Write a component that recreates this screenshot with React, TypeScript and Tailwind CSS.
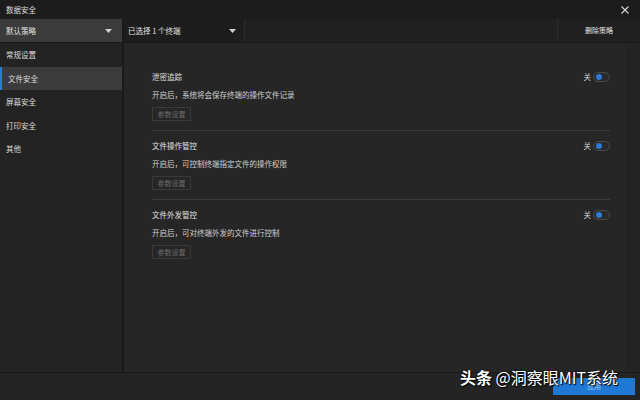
import React from "react";

const font = { fontFamily: '"Noto Sans CJK SC", "Noto Sans", sans-serif' };

function Caret() {
  return (
    <svg width="7" height="4" viewBox="0 0 7 4" className="shrink-0">
      <path d="M0 0 L7 0 L3.5 4 Z" fill="#d0d0d0" />
    </svg>
  );
}

function Toggle() {
  return (
    <div className="flex items-center gap-[2px]">
      <span className="text-[7.5px] leading-none text-[#d8d8d8]">关</span>
      <div className="h-[10px] w-[17px] rounded-full border border-[#4a4a4a] bg-[#2a2a2a] flex items-center pl-[2px]">
        <div className="h-[6px] w-[6px] rounded-full bg-[#2a7ad6]" />
      </div>
    </div>
  );
}

function Section({ title, desc, last }: { title: string; desc: string; last?: boolean }) {
  return (
    <div className={last ? "pt-[9px]" : "pt-[9px] pb-[9px] border-b border-[#3a3a3a]"}>
      <div className="flex h-[12px] items-center justify-between">
        <span className="text-[7.5px] leading-none text-[#e0e0e0]">{title}</span>
        <Toggle />
      </div>
      <div className="mt-[6px] flex h-[12px] items-center text-[7.5px] leading-none text-[#cfcfcf]">{desc}</div>
      <div className="mt-[6px] flex h-[14px] w-[39px] items-center justify-center border border-[#3a3a3a] text-[7px] leading-none text-[#6c6c6c]">
        参数设置
      </div>
    </div>
  );
}

export default function App() {
  const items = ["常规设置", "文件安全", "屏幕安全", "打印安全", "其他"];
  return (
    <div className="relative flex h-[400px] w-[640px] flex-col overflow-hidden bg-[#232323]" style={font}>
      {/* title bar */}
      <div className="flex h-[19px] items-center justify-between bg-[#1c1c1c] pl-[6px] pr-[11px]">
        <span className="text-[7.5px] leading-none text-[#dedede]">数据安全</span>
        <svg width="8" height="8" viewBox="0 0 8 8">
          <path d="M0.5 0.5 L7.5 7.5 M7.5 0.5 L0.5 7.5" stroke="#d8d8d8" strokeWidth="1.1" />
        </svg>
      </div>
      {/* toolbar */}
      <div className="flex h-[24px] border-b border-[#181818] bg-[#202020]">
        <div className="flex w-[122px] items-center justify-between bg-[#3b3b3b] pl-[6px] pr-[10px]">
          <span className="text-[7.5px] leading-none text-[#e2e2e2]">默认策略</span>
          <Caret />
        </div>
        <div className="w-[2px] bg-[#1a1a1a]" />
        <div className="flex w-[121px] items-center justify-between border-r border-[#2c2c2c] bg-[#1d1d1d] pl-[4px] pr-[8px]">
          <span className="text-[7.5px] leading-none text-[#e2e2e2]">已选择 1 个终端</span>
          <Caret />
        </div>
        <div className="flex-1" />
        <div className="flex w-[83px] items-center border-l border-[#2c2c2c] pl-[27px]">
          <span className="text-[7px] leading-none text-[#e6e6e6]">删除策略</span>
        </div>
      </div>
      {/* main */}
      <div className="flex flex-1 border-b border-[#1a1a1a]">
        <div className="w-[122px] bg-[#232323] pt-[0px]">
          {items.map((it, i) => (
            <div
              key={it}
              className={
                "flex h-[23.5px] items-center pl-[6px] text-[7.5px] leading-none text-[#dcdcdc] " +
                (i === 1 ? "bg-[#3b3b3b] border-l-2 border-[#2a7ad6] pl-[4px]" : "")
              }
            >
              {it}
            </div>
          ))}
        </div>
        <div className="w-[2px] bg-[#1b1b1b]" />
        <div className="flex-1 bg-[#262626] pl-[28px] pr-[16px] pt-[19px]">
          <Section title="泄密追踪" desc="开启后，系统将会保存终端的操作文件记录" />
          <Section title="文件操作管控" desc="开启后，可控制终端指定文件的操作权限" />
          <Section title="文件外发管控" desc="开启后，可对终端外发的文件进行控制" last />
        </div>
        <div className="w-[14px] bg-[#232323]" />
      </div>
      {/* footer */}
      <div className="flex h-[27px] items-start justify-end bg-[#242424] pr-[5px] pt-[5px]">
        <div className="flex h-[17px] w-[82px] items-center justify-center bg-[#1f78d4] text-[7px] leading-none text-[#9cc4ee]">
          应用
        </div>
      </div>
      {/* watermark */}
      <div
        className="absolute left-[460px] top-[369px] whitespace-nowrap text-[16px] leading-none text-white"
        style={{ textShadow: "0 0 2px #000, 1px 1px 1px #000" }}
      >
        <span className="font-bold">头条</span> @洞察眼MIT系统
      </div>
    </div>
  );
}
